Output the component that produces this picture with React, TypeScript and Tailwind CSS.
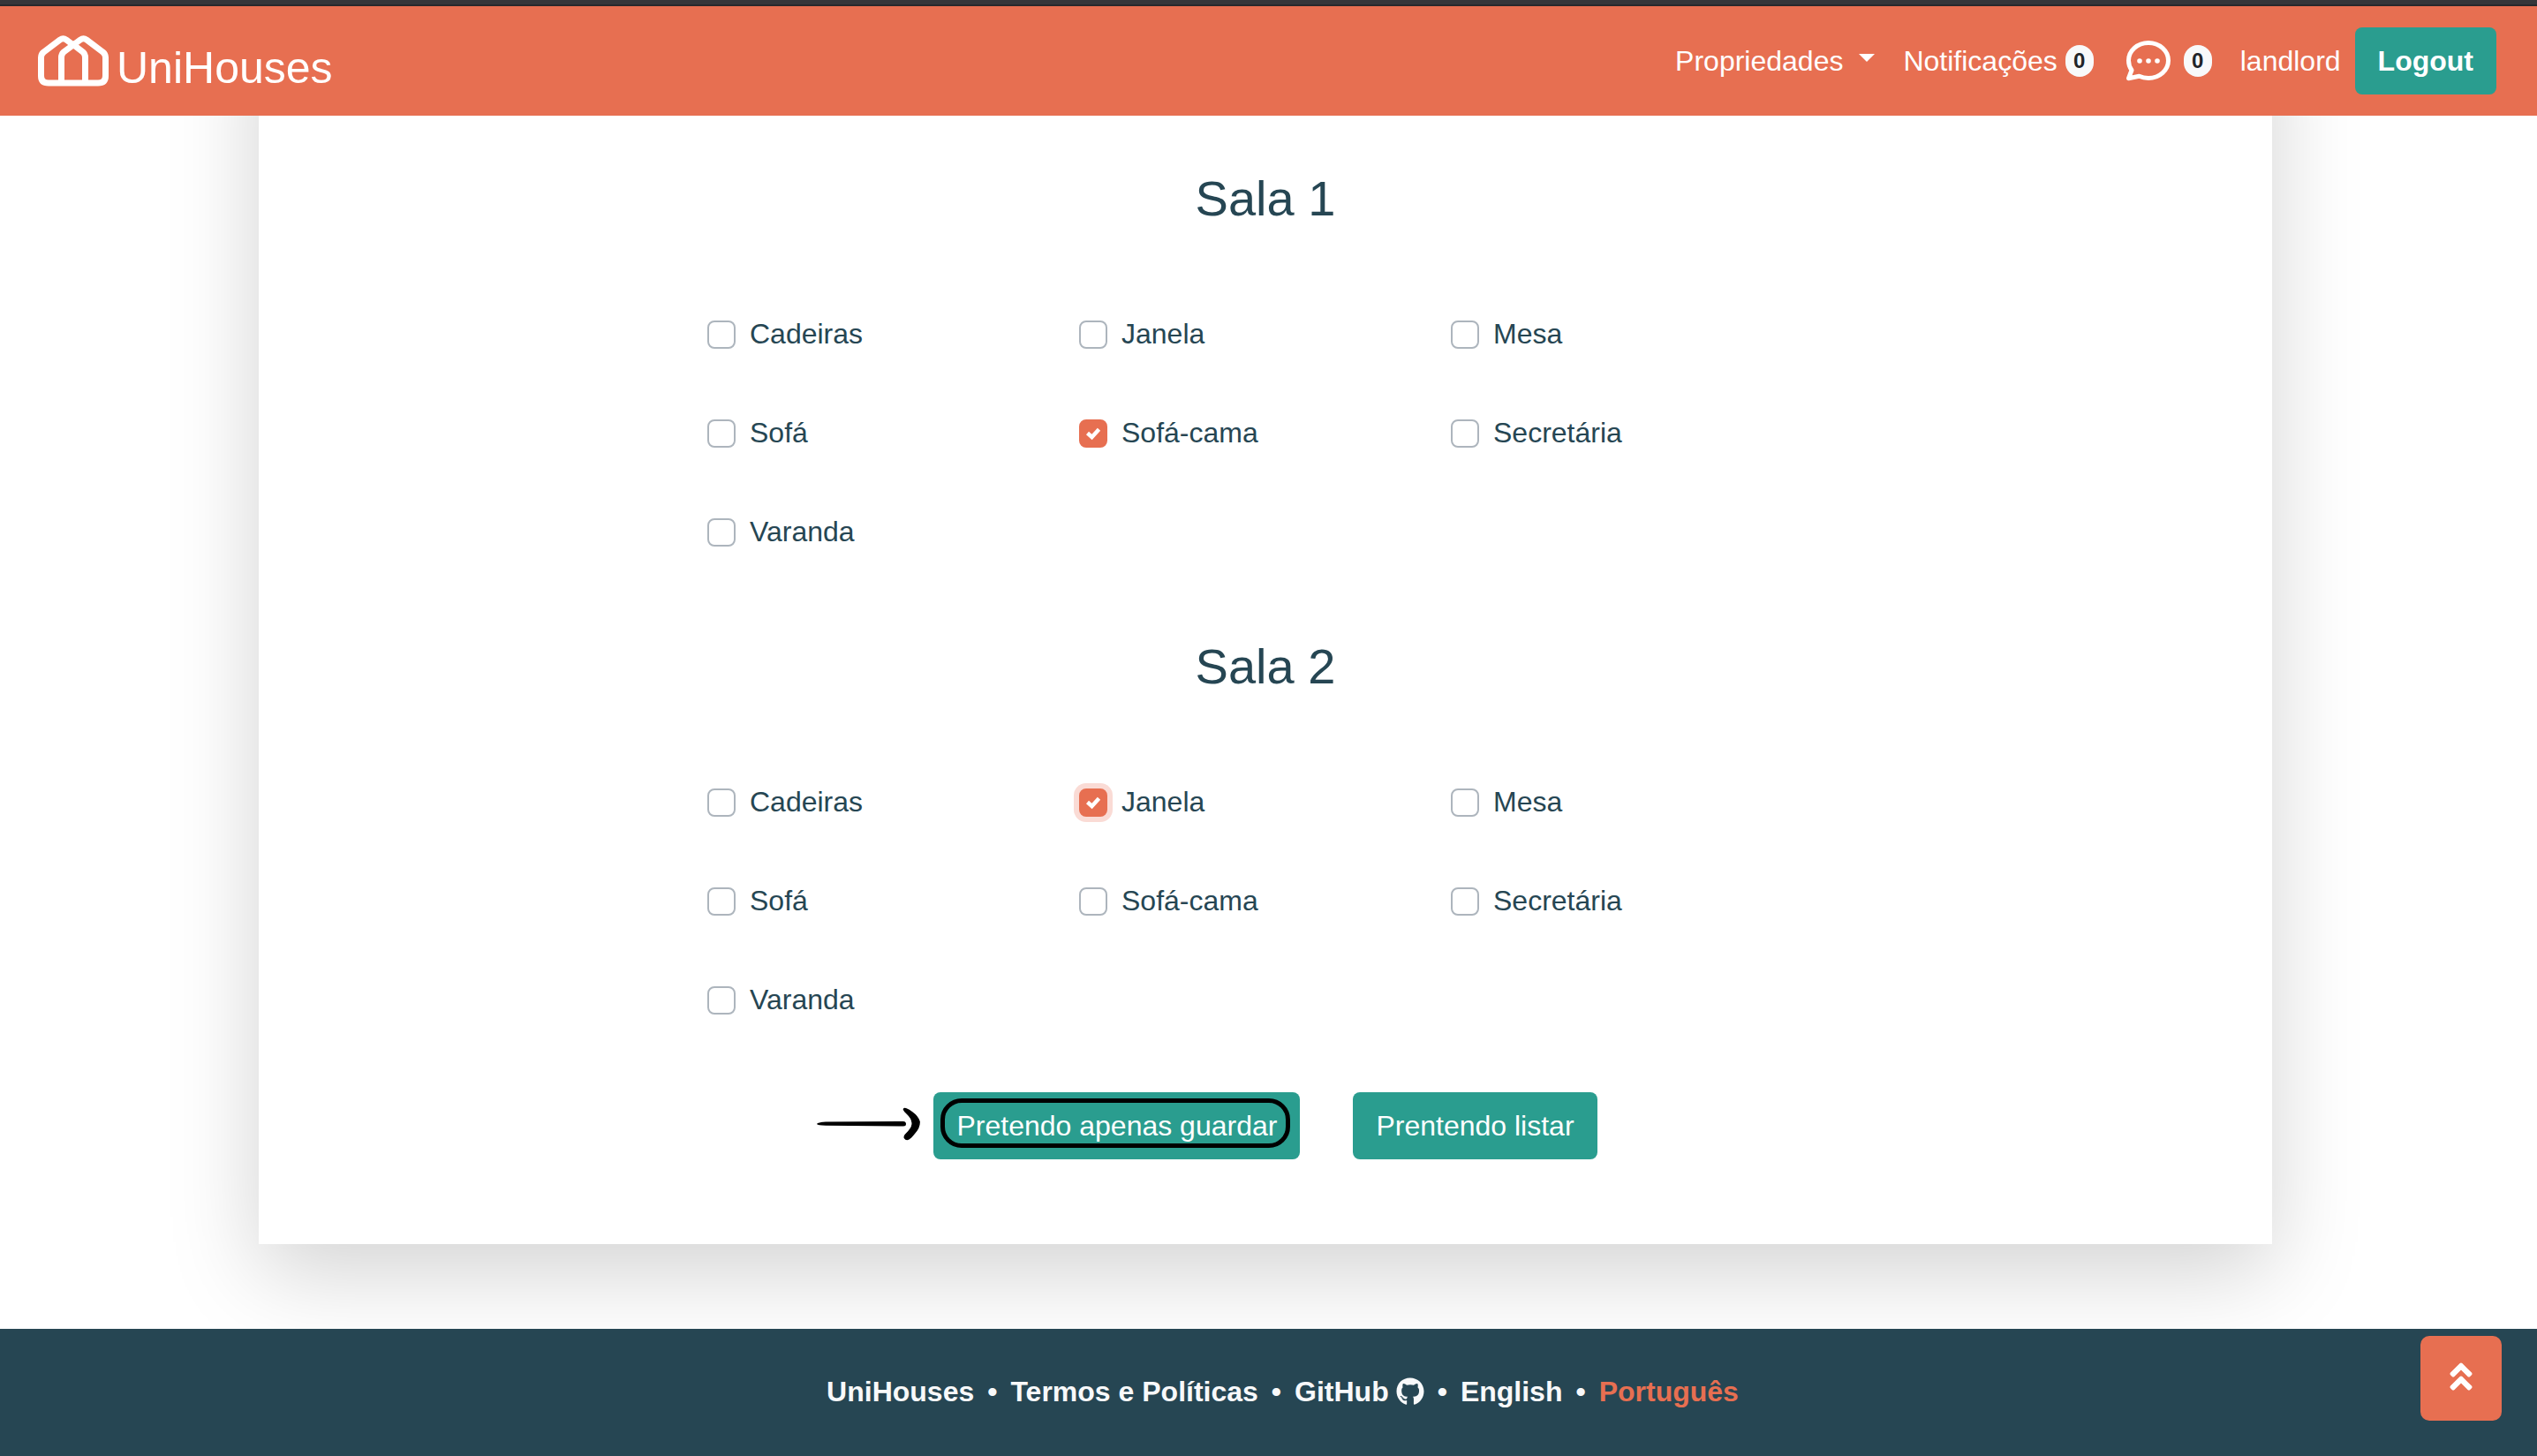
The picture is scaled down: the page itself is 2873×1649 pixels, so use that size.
import { useState } from "react";
import { FaAngleDoubleUp, FaGithub } from "react-icons/fa";

const amenities = [
  "Cadeiras",
  "Janela",
  "Mesa",
  "Sofá",
  "Sofá-cama",
  "Secretária",
  "Varanda",
];

function Logo() {
  return (
    <svg viewBox="0 0 80 58" className="h-[58px] w-20" fill="none" stroke="#fff" strokeWidth="7" strokeLinejoin="round" aria-hidden="true">
      <path d="M40 11 L32 5 Q28.500 2.500 25 5 L6.500 19 Q3.500 21.500 3.500 25 V46 Q3.500 54 12 54 H68 Q76.500 54 76.500 46 V25 Q76.500 21.500 73.500 19 L55 5 Q51.500 2.500 48 5 L29 19 Q26.500 21.500 26.500 25 V54" />
      <path d="M38 9 L51 19 Q53.500 21.500 53.500 25 V54" />
    </svg>
  );
}

function ChatIcon() {
  return (
    <svg viewBox="0 0 50 46" className="h-[46px] w-[50px]" aria-hidden="true">
      <path
        d="M25 2.500 C37.500 2.500 47.500 11.500 47.500 22.500 C47.500 33.500 37.500 42.500 25 42.500 C21 42.500 17.500 41.700 14.500 40.300 L2.500 42.700 L6 33.500 C3.700 30.300 2.500 26.500 2.500 22.500 C2.500 11.500 12.500 2.500 25 2.500 Z"
        fill="none"
        stroke="#fff"
        strokeWidth="5"
        strokeLinejoin="round"
      />
      <circle cx="15" cy="23" r="2.800" fill="#fff" />
      <circle cx="25" cy="23" r="2.800" fill="#fff" />
      <circle cx="35" cy="23" r="2.800" fill="#fff" />
    </svg>
  );
}

function Badge() {
  return (
    <span className="flex h-9 w-8 items-center justify-center rounded-full bg-[#f8f9fa] text-2xl font-bold leading-none text-[#212529]">
      0
    </span>
  );
}

function Option({ id, label, initial, focused }: { id: string; label: string; initial: boolean; focused: boolean }) {
  const [on, setOn] = useState(initial);
  return (
    <div className="flex h-12 items-center gap-4">
      <span className="relative flex size-8">
        <input
          id={id}
          type="checkbox"
          checked={on}
          onChange={() => setOn(!on)}
          className={
            "size-8 appearance-none rounded-lg border-2 border-[#adb5bd] bg-white checked:border-[#e76f51] checked:bg-[#e76f51]" +
            (focused ? " shadow-[0_0_0_6px_#fadbd5]" : "")
          }
        />
        {on && (
          <svg viewBox="0 0 32 32" className="pointer-events-none absolute inset-0 size-8" fill="none" stroke="#fff" strokeWidth="4.500" aria-hidden="true">
            <path d="M9.500 15.500 L14.500 20 L22.500 11.300" />
          </svg>
        )}
      </span>
      <label htmlFor={id} className="pb-0.5">{label}</label>
    </div>
  );
}

function Room({ name, checked, focused }: { name: string; checked: string; focused?: string }) {
  return (
    <section>
      <h3 className="text-center text-[56px] leading-[68px]">{name}</h3>
      <div className="mx-auto mt-24 grid w-[1264px] grid-cols-[421px_421px_421px] gap-y-16">
        {amenities.map((a) => (
          <Option key={a} id={name + "-" + a} label={a} initial={a === checked} focused={a === focused} />
        ))}
      </div>
    </section>
  );
}

export default function App() {
  return (
    <div className="flex min-h-screen flex-col bg-white font-['Liberation_Sans',Arial,sans-serif] text-[32px] leading-[48px] text-[#264653]">
      <div className="relative z-10 h-[7px] border-b-2 border-[#28292c] bg-[#35363a]" />
      <header className="relative z-10 flex h-[124px] items-center justify-between bg-[#e76f51] pl-[43px] pr-[46px] text-white">
        <a href="#" className="flex items-center gap-[9px]">
          <Logo />
          <span className="pt-4 text-[50px] leading-[60px]">UniHouses</span>
        </a>
        <nav className="flex items-center">
          <button type="button" className="flex items-center">
            Propriedades
            <svg viewBox="0 0 18 9" className="mb-2 ml-[18px] h-[9px] w-[18px]" fill="#fff" aria-hidden="true">
              <path d="M0 0H18L9 9Z" />
            </svg>
          </button>
          <a href="#" className="ml-8 flex items-center gap-[9px]">
            Notificações
            <Badge />
          </a>
          <a href="#" aria-label="Mensagens" className="ml-[37px] flex items-center gap-[15px]">
            <ChatIcon />
            <Badge />
          </a>
          <a href="#" className="ml-8">landlord</a>
          <button type="button" className="ml-4 h-[76px] rounded-lg bg-[#2a9d8f] px-[26px] font-bold">
            Logout
          </button>
        </nav>
      </header>

      <main className="-mt-32 grow pr-[7px]">
        <div className="mx-auto flex max-w-[2280px] flex-col gap-[94px] bg-white pb-24 pt-[188px] shadow-[0_32px_96px_rgba(0,0,0,0.175)]">
          <Room name="Sala 1" checked="Sofá-cama" />
          <Room name="Sala 2" checked="Janela" focused="Janela" />
          <div className="-mt-3.5 flex justify-center gap-[60px]">
            <div className="relative">
              <button type="button" className="h-[76px] rounded-lg bg-[#2a9d8f] px-[26px] text-white">
                Pretendo apenas guardar
              </button>
              <span className="pointer-events-none absolute bottom-[13px] left-2 right-[11px] top-[7px] rounded-3xl border-[5px] border-black" />
              <svg viewBox="0 0 118 40" className="absolute right-full top-4 mr-[14px] h-10 w-[118px]" aria-hidden="true">
                <path d="M0 20 Q1 18 10 17.500 L98 17 Q101 17.300 101 20 Q101 22.500 98 22.500 L10 21.800 Q1 21.500 0 20 Z" />
                <path d="M97.700 3.700 Q97.500 1 101 2 Q105 3.500 108 6 Q115 11 116.800 17 Q117.500 24 111 31 Q107 36 104.500 37.500 Q101 39.500 98.700 36 Q98 33.500 100 31.500 Q107 25 107.500 20 Q107.500 14 102 9 Q98.500 6 97.700 3.700 Z" />
              </svg>
            </div>
            <button type="button" className="h-[76px] rounded-lg bg-[#2a9d8f] px-[26px] text-white">
              Prentendo listar
            </button>
          </div>
        </div>
      </main>

      <footer className="relative mt-24 flex h-36 items-center justify-center bg-[#264653] pb-0.5 pl-8 font-bold text-[#f8f9fa]">
        <ul className="flex items-center gap-[15px]">
          <li><a href="#">UniHouses</a></li>
          <li>•</li>
          <li><a href="#">Termos e Políticas</a></li>
          <li>•</li>
          <li>
            <a href="#" className="flex items-center gap-2">
              GitHub
              <FaGithub className="size-8" />
            </a>
          </li>
          <li>•</li>
          <li><a href="#">English</a></li>
          <li>•</li>
          <li><a href="#" className="text-[#e76f51]">Português</a></li>
        </ul>
        <button type="button" aria-label="Voltar ao topo" className="absolute right-10 top-2 flex h-24 w-[92px] items-center justify-center rounded-[10px] bg-[#e76f51] pb-1 text-white">
          <FaAngleDoubleUp className="size-10" />
        </button>
      </footer>
    </div>
  );
}
